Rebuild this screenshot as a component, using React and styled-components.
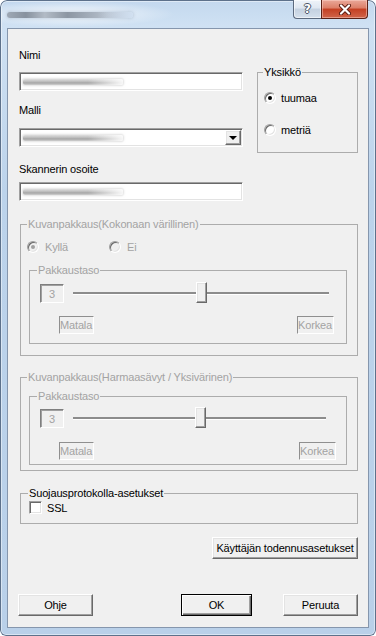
import React from 'react'
import styled, { createGlobalStyle, css } from 'styled-components'

const Global = createGlobalStyle`
  html, body {
    margin: 0;
    background: #fff;
  }
  body {
    font-family: "Liberation Sans", Arial, sans-serif;
    font-size: 11px;
    letter-spacing: -0.15px;
    color: #000;
  }
`

const sunken = css`
  border: 1px solid;
  border-color: #a0a0a0 #fff #fff #a0a0a0;
  box-shadow: inset 1px 1px 0 #696969, inset -1px -1px 0 #e3e3e3;
`

const raised = css`
  border: 1px solid;
  border-color: #fff #696969 #696969 #fff;
  box-shadow: inset -1px -1px 0 #a0a0a0, inset 1px 1px 0 #e3e3e3;
`

// the reference has its title and field values smudged out, so they are drawn as smudges
function App() {
  return (
    <>
      <Global />
      <Window>
        <TitleBar>
          <TitleSmudge />
          <Caption>
            <HelpBtn>?</HelpBtn>
            <CloseBtn>
              <svg width="14" height="11" viewBox="0 0 14 11">
                <path d="M3 1.5 L11 9.5 M11 1.5 L3 9.5" stroke="#5a1b10" strokeWidth="4" strokeLinecap="round" />
                <path d="M3 1.5 L11 9.5 M11 1.5 L3 9.5" stroke="#fff" strokeWidth="2.2" strokeLinecap="round" />
              </svg>
            </CloseBtn>
          </Caption>
        </TitleBar>

        <Client>
          <TopSection>
            <Fields>
              <Label>Nimi</Label>
              <TextField $mt={10}>
                <Smudge />
              </TextField>
              <Label $mt={13}>Malli</Label>
              <TextField $mt={11}>
                <Smudge />
                <DropBtn />
              </TextField>
              <Label $mt={16}>Skannerin osoite</Label>
              <TextField $mt={6}>
                <Smudge />
              </TextField>
            </Fields>

            <UnitGroup>
              <Legend $lx={-1}>Yksikkö</Legend>
              <RadioRow $gap={5}>
                <Radio $on />
                tuumaa
              </RadioRow>
              <RadioRow $gap={5} $mt={16}>
                <Radio />
                metriä
              </RadioRow>
            </UnitGroup>
          </TopSection>

          <Group $mt={16} $pad="8px 10px 11px 8px">
            <Legend $lx={-2} $off>Kuvanpakkaus(Kokonaan värillinen)</Legend>
            <Choices>
              <RadioRow $gap={6} $off $w={82}>
                <Radio $on $off />
                Kyllä
              </RadioRow>
              <RadioRow $gap={6} $off>
                <Radio $off />
                Ei
              </RadioRow>
            </Choices>
            <Level $mt={8} $pad="5px 12px 9px 10px" thumb={0.5} labelsGap={13} />
          </Group>

          <Group $mt={14} $pad="0 10px 5px 8px">
            <Legend $lx={-2} $off>Kuvanpakkaus(Harmaasävyt / Yksivärinen)</Legend>
            <Level $mt={5} $pad="4px 10px 4px 10px" thumb={0.5} labelsGap={14} trackRight={10} />
          </Group>

          <Group $mt={15} $pad="1px 10px 9px 9px">
            <Legend $lx={-2}>Suojausprotokolla-asetukset</Legend>
            <CheckRow>
              <Check />
              SSL
            </CheckRow>
          </Group>

          <AuthBtn>Käyttäjän todennusasetukset</AuthBtn>

          <Footer>
            <Btn $w={75} $ml={-1}>Ohje</Btn>
            <Spacer />
            <Btn $w={71} $def>OK</Btn>
            <Btn $w={75} $ml={31}>Peruuta</Btn>
          </Footer>
        </Client>
      </Window>
    </>
  )
}

function Level({ $mt, $pad, thumb, labelsGap, trackRight = 5 }) {
  return (
    <Group $mt={$mt} $pad={$pad} $inner>
      <Legend $lx={-3} $off>Pakkaustaso</Legend>
      <SliderRow>
        <ValueBox>3</ValueBox>
        <Track $right={trackRight}>
          <Channel />
          <Thumb style={{ left: `calc(${thumb * 100}% - 5px)` }} />
        </Track>
      </SliderRow>
      <Ends $mt={labelsGap}>
        <EndBox>Matala</EndBox>
        <EndBox>Korkea</EndBox>
      </Ends>
    </Group>
  )
}

export default App

const Window = styled.div`
  width: 376px;
  height: 636px;
  box-sizing: border-box;
  display: flex;
  flex-direction: column;
  border-radius: 7px 7px 6px 6px;
  overflow: hidden;
  background:
    radial-gradient(ellipse 105px 13px at 70px 14px, rgba(255,255,255,0.85), rgba(255,255,255,0) 100%),
    linear-gradient(180deg, #c3d8ee 0%, #cfe1f3 4%, #bcd3eb 30%, #b9d0e9 100%);
  box-shadow: inset 0 0 0 1px #5d718b, inset 0 0 0 2px rgba(255,255,255,0.45);
`

const TitleBar = styled.div`
  height: 28px;
  flex-shrink: 0;
  display: flex;
  align-items: flex-start;
  justify-content: space-between;
  padding: 0 8px 0 7px;
`

const TitleSmudge = styled.div`
  width: 126px;
  height: 6px;
  margin-top: 12px;
  border-radius: 3px;
  background:
    linear-gradient(90deg, rgba(205,222,240,0) 0%, rgba(205,222,240,0) 72%, rgba(210,225,242,0.95) 100%),
    linear-gradient(90deg, #9ea8b5 0%, #87919e 15%, #b2bbc6 30%, #8c96a3 48%, #9ea8b5 62%, #b6c0cc 80%, #bcc7d5 100%);
  box-shadow: 0 0 3px 1px rgba(170, 185, 205, 0.55);
`

const Caption = styled.div`
  display: flex;
  height: 19px;
`

const HelpBtn = styled.div`
  width: 28px;
  box-sizing: border-box;
  border: 1px solid #5c6a7e;
  border-top: none;
  border-right: none;
  border-radius: 0 0 0 4px;
  background: linear-gradient(180deg, #eef3f9 0%, #dfe7f1 45%, #c4d1e0 50%, #d5e0ec 100%);
  box-shadow: inset 0 0 0 1px rgba(255,255,255,0.55);
  display: flex;
  align-items: center;
  justify-content: center;
  font-family: "DejaVu Sans", sans-serif;
  font-weight: bold;
  font-size: 12px;
  color: #fff;
  text-shadow: -1px 0 #4a5666, 1px 0 #4a5666, 0 -1px #4a5666, 0 1px #4a5666;
`

const CloseBtn = styled.div`
  width: 47px;
  box-sizing: border-box;
  border: 1px solid #5b2116;
  border-top: none;
  border-radius: 0 0 4px 0;
  background: linear-gradient(180deg, #eaa899 0%, #dc7e67 45%, #c43f22 50%, #d0654a 100%);
  box-shadow: inset 0 0 0 1px rgba(255,220,210,0.45);
  display: flex;
  align-items: center;
  justify-content: center;
`

const Client = styled.div`
  flex: 1;
  min-height: 0;
  margin: 0 7px 8px;
  background: #f0f0f0;
  border: 1px solid #8596ad;
  padding: 0 10px 0 11px;
  display: flex;
  flex-direction: column;
`

const TopSection = styled.div`
  display: flex;
  align-items: flex-start;
  padding-top: 20px;
`

const Fields = styled.div`
  width: 224px;
  display: flex;
  flex-direction: column;
`

const Label = styled.div`
  line-height: 13px;
  margin-top: ${p => p.$mt || 0}px;
`

const TextField = styled.div`
  ${sunken};
  box-sizing: border-box;
  height: 19px;
  margin-top: ${p => p.$mt || 0}px;
  background: #fff;
  display: flex;
  align-items: center;
  justify-content: space-between;
  padding: 0 1px 0 3px;
  overflow: hidden;
`

const Smudge = styled.div`
  width: 100px;
  height: 6px;
  border-radius: 2px;
  background:
    linear-gradient(90deg, rgba(255,255,255,0) 0%, rgba(255,255,255,0) 65%, rgba(255,255,255,0.9) 100%),
    linear-gradient(180deg, #dedede 0%, #c4c4c4 35%, #a6a6a6 65%, #d0d0d0 100%);
  box-shadow: 0 0 2px 1px rgba(205, 205, 205, 0.6);
`

const DropBtn = styled.div`
  ${raised};
  box-sizing: border-box;
  width: 16px;
  height: 15px;
  background: #f0f0f0;
  display: flex;
  align-items: center;
  justify-content: center;

  &::after {
    content: "";
    border-top: 4px solid #000;
    border-left: 4px solid transparent;
    border-right: 4px solid transparent;
    margin-top: 1px;
  }
`

const Group = styled.fieldset`
  margin: ${p => p.$mt || 0}px 0 0 ${p => (p.$inner ? 0 : 1)}px;
  padding: ${p => p.$pad};
  border: 1px solid #acacac;
  border-radius: 0;
  min-width: 0;
`

const UnitGroup = styled.fieldset`
  margin: 16px 0 0 auto;
  width: 101px;
  box-sizing: border-box;
  padding: 11px 4px 14px 6px;
  border: 1px solid #acacac;
  min-width: 0;
`

const Legend = styled.legend`
  padding: 0 1px;
  margin-left: ${p => p.$lx}px;
  line-height: 14px;
  color: ${p => (p.$off ? '#a3a3a3' : '#000')};
`

const Choices = styled.div`
  display: flex;
  margin-left: -2px;
`

const RadioRow = styled.label`
  display: flex;
  align-items: center;
  height: 16px;
  gap: ${p => p.$gap}px;
  margin-top: ${p => p.$mt || 0}px;
  width: ${p => (p.$w ? `${p.$w}px` : 'auto')};
  color: ${p => (p.$off ? '#a3a3a3' : '#000')};
`

const Radio = styled.span`
  width: 12px;
  height: 12px;
  box-sizing: border-box;
  border-radius: 50%;
  border: 1px solid;
  border-color: #a0a0a0 #fff #fff #a0a0a0;
  box-shadow: inset 1px 1px 0 #696969, inset -1px -1px 0 #e3e3e3;
  background: ${p => (p.$off ? '#f0f0f0' : '#fff')};
  display: flex;
  align-items: center;
  justify-content: center;
  flex-shrink: 0;

  &::after {
    content: "";
    display: ${p => (p.$on ? 'block' : 'none')};
    width: 4px;
    height: 4px;
    border-radius: 50%;
    background: ${p => (p.$off ? '#a0a0a0' : '#000')};
  }
`

const SliderRow = styled.div`
  display: flex;
  align-items: flex-end;
  height: 21px;
`

const ValueBox = styled.div`
  width: 24px;
  height: 19px;
  box-sizing: border-box;
  border: 1px solid;
  border-color: #7f7f7f #fff #fff #7f7f7f;
  box-shadow: inset 1px 1px 0 #a0a0a0;
  display: flex;
  align-items: center;
  justify-content: center;
  color: #a3a3a3;
`

const Track = styled.div`
  flex: 1;
  position: relative;
  height: 21px;
  margin: 0 ${p => p.$right}px 0 9px;
  display: flex;
  align-items: center;
`

const Channel = styled.div`
  width: 100%;
  height: 2px;
  background: #8c8c8c;
  box-shadow: 0 1px 0 #fff;
`

const Thumb = styled.div`
  ${raised};
  position: absolute;
  top: 0;
  width: 11px;
  height: 21px;
  box-sizing: border-box;
  background: #f0f0f0;
`

const Ends = styled.div`
  display: flex;
  justify-content: space-between;
  padding-left: 19px;
  margin-top: ${p => p.$mt}px;
`

const EndBox = styled.div`
  height: 18px;
  box-sizing: border-box;
  line-height: 16px;
  padding: 0 1px 0 0;
  border: 1px solid;
  border-color: #8f8f8f #fff #fff #8f8f8f;
  color: #a3a3a3;
`

const CheckRow = styled.label`
  display: flex;
  align-items: center;
  gap: 5px;
  height: 13px;
  margin-left: -1px;
`

const Check = styled.span`
  ${sunken};
  width: 13px;
  height: 13px;
  box-sizing: border-box;
  background: #fff;
`

const Btn = styled.button`
  font: inherit;
  letter-spacing: inherit;
  color: #000;
  height: 22px;
  width: ${p => p.$w}px;
  margin-left: ${p => p.$ml || 0}px;
  padding: 0;
  background: #f0f0f0;
  ${raised};
  ${p => p.$def && css`
    border-color: #000;
    box-shadow: inset 1px 1px 0 #fff, inset -1px -1px 0 #696969, inset -2px -2px 0 #a0a0a0;
  `}
`

const AuthBtn = styled(Btn)`
  align-self: flex-end;
  width: 146px;
  margin-top: 13px;
`

const Footer = styled.div`
  display: flex;
  margin-top: 35px;
`

const Spacer = styled.div`
  flex: 1;
`
